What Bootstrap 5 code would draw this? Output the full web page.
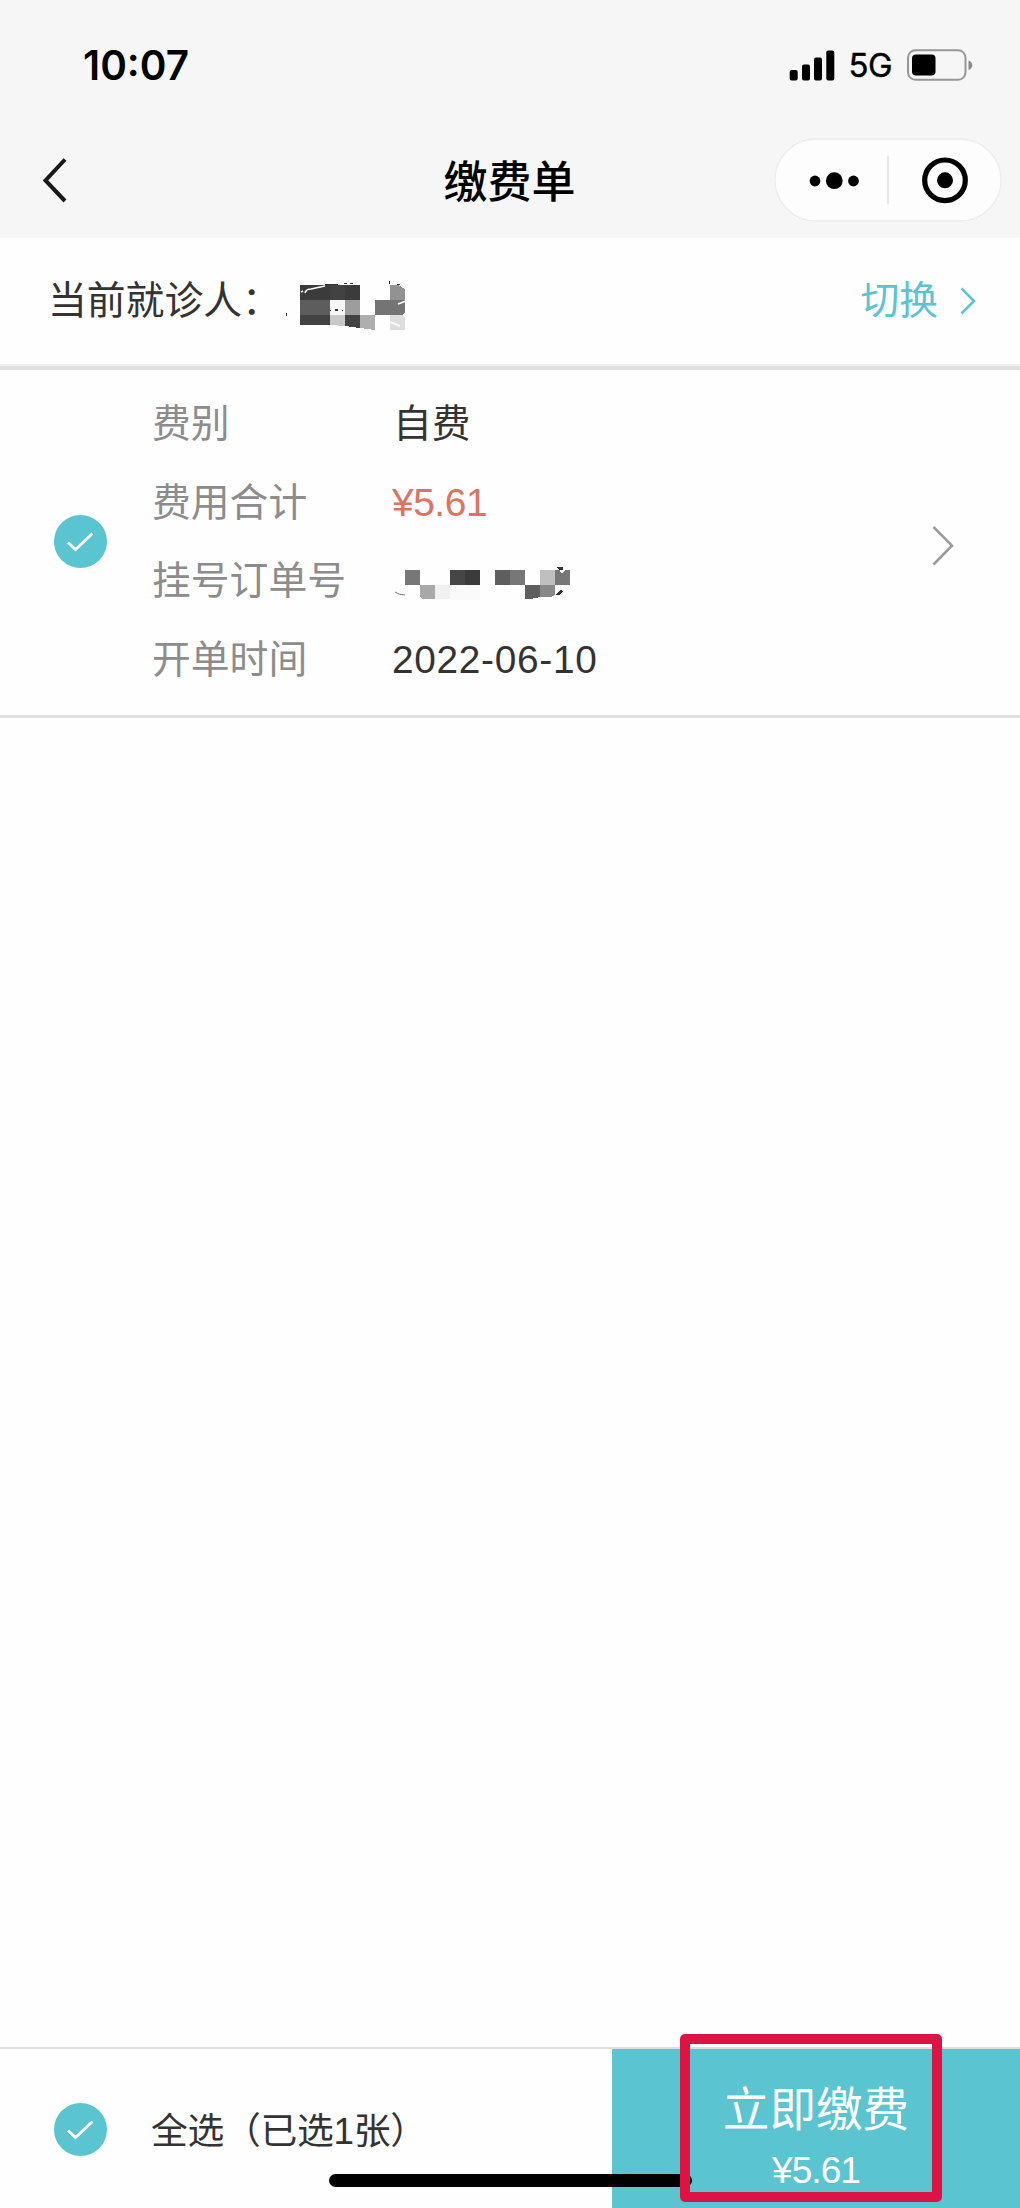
<!DOCTYPE html>
<html lang="zh-CN">
<head>
<meta charset="utf-8">
<meta name="viewport" content="width=device-width, initial-scale=1">
<title>缴费单</title>
<link rel="stylesheet" href="https://cdn.jsdelivr.net/npm/bootstrap@5.3.0/dist/css/bootstrap.min.css">
<style>
  body { font-family: "Liberation Sans", "Noto Sans CJK SC", sans-serif; font-size: 38.8px; line-height: 1; color: #333; background: #fefefe; }
  svg { display: block; flex: none; }
  .screen { height: 2208px; overflow: hidden; }
  .top-area { background: #f6f6f6; height: 238px; }
  .status-line { height: 122px; padding: 8px 47px 0 83px; font-family: Inter, sans-serif; color: #000; }
  .clock { font-size: 40.5px; font-weight: 600; padding-top: 2px; }
  .net { font-size: 33px; margin: 1px 15px 0 14px; letter-spacing: -.6px; -webkit-text-stroke: .4px #000; }
  .title-line { height: 116px; padding: 0 18px 0 42px; }
  .page-title { font-size: 44px; font-weight: 500; color: #000; font-family: "Noto Sans CJK SC", sans-serif; padding: 0 1px 1px 0; }
  .capsule { width: 228px; height: 84px; }
  .patient { height: 132px; padding: 0 43px 1px 48px; border-bottom: 4px solid #e0e0e0; box-shadow: inset 0 -2px #efefef; }
  .teal { color: #5bc4d1; }
  .bill { height: 348px; padding: 15px 66px 0 54px; border-bottom: 3px solid #e0e0e0; }
  .bill-row { height: 78.7px; }
  .bill-key { width: 241px; color: #8c8c8c; }
  .price { color: #dc7460; letter-spacing: -.4px; margin-left: -1px; }
  .day { letter-spacing: .7px; margin-left: -1px; }
  .pay-bar { height: 161px; border-top: 2px solid #dedede; }
  .choose { width: 612px; padding: 4px 0 0 54px; font-size: 36.8px; }
  .choose-text { margin-left: 44px; padding-top: 4px; letter-spacing: -.3px; }
  .pay-btn { background: #5bc4d1; padding: 36px 0 0; }
  .pay-name { font-size: 46.6px; line-height: 50px; }
  .pay-sum { font-size: 37px; line-height: 40px; margin-top: 16px; letter-spacing: -.9px; }
  .home-line { left: 329px; top: 2174px; width: 363px; height: 13px; border-radius: 7px; background: #000; }
  .marker { left: 680px; top: 2034px; width: 262px; height: 168px; border: 10px solid #db1444; border-radius: 5px; }
</style>
<script src="https://cdn.jsdelivr.net/npm/bootstrap@5.3.0/dist/js/bootstrap.bundle.min.js"></script>
</head>
<body>
<div class="screen position-relative d-flex flex-column">
  <header class="top-area">
    <div class="status-line d-flex align-items-center">
      <span class="clock me-auto">10:07</span>
      <svg width="46" height="31" viewBox="0 0 46 31"><g fill="#000"><rect x=".7" y="20" width="8" height="10.5" rx="2"/><rect x="13" y="14.5" width="8" height="16" rx="2"/><rect x="25" y="7.5" width="8" height="23" rx="2"/><rect x="37.3" y=".5" width="8" height="30" rx="2"/></g></svg>
      <span class="net">5G</span>
      <svg width="66" height="32" viewBox="0 0 66 32"><rect x="1" y="1.2" width="57.5" height="29.6" rx="7.5" fill="none" stroke="#979797" stroke-width="2"/><rect x="5" y="5.5" width="23.5" height="21" rx="4" fill="#000"/><path d="M61.5 11.5c5 1.500 5 8 0 9.500z" fill="#888"/></svg>
    </div>
    <nav class="title-line d-flex align-items-center justify-content-between position-relative">
      <svg width="26" height="46" viewBox="0 0 26 46"><path d="M23 2.500L3.500 23.500l19.500 20.500" fill="none" stroke="#181818" stroke-width="4"/></svg>
      <h1 class="page-title m-0 position-absolute top-50 start-50 translate-middle">缴费单</h1>
      <svg class="capsule" viewBox="0 0 228 84"><rect x="1" y="1" width="226" height="82" rx="41" fill="#fdfdfd" stroke="#ececec" stroke-width="1.300"/><path d="M114 18v48" stroke="#dfdfdf" stroke-width="1.500"/><circle cx="41" cy="43" r="5.400"/><circle cx="60.300" cy="42.700" r="8.400"/><circle cx="79.500" cy="43" r="5.400"/><circle cx="171" cy="42.300" r="20.300" fill="none" stroke="#000" stroke-width="5.200"/><circle cx="171" cy="42.300" r="8"/></svg>
    </nav>
  </header>

  <section class="patient d-flex align-items-center">
    <span>当前就诊人：</span>
    <svg width="125" height="50" viewBox="0 0 125 50" style="margin:0 0 0 4px" overflow="visible" shape-rendering="crispEdges">
      <g transform="translate(-15,0)">
      <path fill="#3b3b3b" d="M30 8h60v15H30z"/><path fill="#424242" d="M60 8h15v15H60z"/><path fill="#929292" d="M120 8h8l7 4v11h-15z"/>
      <path fill="#5d5d5d" d="M30 23h30v15H30z"/><path fill="#f6f6f6" d="M60 23h15v15H60z"/><path fill="#9d9d9d" d="M75 23h15v15H75z"/><path fill="#747474" d="M105 23h30v13l-3 2h-27z"/>
      <path fill="#424242" d="M30 38h30v10H30zM75 38h15v13l-15-2z"/><path fill="#c8c8c8" d="M60 38h15v11l-15-1z"/><path fill="#aeaeae" d="M90 38h15v15l-15-2z"/><path fill="#dedede" d="M120 38h12l3 3v12h-15z"/>
      <path fill="#333" d="M55 7h13v1H55zM74 6h3v1h-3zM80 6h3v1h-3zM119 4h1v3h-1zM127 7h3v1h-3zM65 32h3v2h-3zM60 33h1v1h-1zM72 33h1v1h-1zM16 36h1v3h-1z"/>
      <g shape-rendering="auto" fill="none" stroke="#fff" stroke-width="1.500"><path d="M35 16q1-4 6-4l14-3M31 15l2-1M128 27l8-3M120 45l10 4"/></g></g>
    </svg>
    <a href="#" class="teal text-decoration-none ms-auto d-flex align-items-center"><span>切换</span>
      <svg width="18" height="30" viewBox="0 0 18 30" style="margin-left:21px"><path d="M2.500 2.500L15 15 2.500 27.500" fill="none" stroke="#5bc4d1" stroke-width="2.500"/></svg></a>
  </section>

  <section class="bill d-flex">
    <svg width="53" height="53" viewBox="0 0 53 53" style="margin-top:130px"><circle cx="26.500" cy="26.500" r="26.500" fill="#5bc4d1"/><path d="M14 27.500l7.500 7L38.500 18.500" fill="none" stroke="#fff" stroke-width="2.800"/></svg>
    <div class="flex-grow-1" style="margin-left:45px">
      <div class="bill-row d-flex align-items-center"><span class="bill-key">费别</span><span>自费</span></div>
      <div class="bill-row d-flex align-items-center"><span class="bill-key">费用合计</span><span class="price">¥5.61</span></div>
      <div class="bill-row d-flex align-items-center"><span class="bill-key">挂号订单号</span>
        <svg width="180" height="36" viewBox="13 14 180 36" shape-rendering="crispEdges">
          <path fill="#777" d="M25 20h15v15H25zM130 20h15v15h-15zM175 20h15v15h-15z"/><path fill="#464646" d="M70 20h15v15H70z"/><path fill="#3b3b3b" d="M85 20h15v15H85z"/><path fill="#5e5e5e" d="M115 20h15v15h-15zM145 35h15v12l-10 2h-5z"/><path fill="#bfbfbf" d="M160 20h15v15h-15z"/><path fill="#a8a8a8" d="M40 35h15v14H43l-3-2z"/><path fill="#f0f0f0" d="M55 35h15v14H55z"/><path fill="#888" d="M160 35h15v10l-4 2h-11z"/><path fill="#fafafa" d="M70 35h30v15H70z"/>
          <path fill="#333" d="M177 17h6v3h-4zM181 39l2 3-4 3h-3z"/><path fill="none" stroke="#777" shape-rendering="auto" d="M15 42q4 3 10 3"/><path fill="#fff" d="M180 20h5l-2 3h-2z"/>
        </svg></div>
      <div class="bill-row d-flex align-items-center"><span class="bill-key">开单时间</span><span class="day">2022-06-10</span></div>
    </div>
    <svg width="22" height="42" viewBox="0 0 22 42" style="margin-top:140px"><path d="M1.500 2L20 20.700 1.500 39.500" fill="none" stroke="#999" stroke-width="2.500"/></svg>
  </section>

  <footer class="pay-bar d-flex mt-auto">
    <div class="choose d-flex align-items-center">
      <svg width="53" height="53" viewBox="0 0 53 53" style="margin-top:-2px"><circle cx="26.500" cy="26.500" r="26.500" fill="#5bc4d1"/><path d="M14 27.500l7.500 7L38.500 18.500" fill="none" stroke="#fff" stroke-width="2.800"/></svg>
      <span class="choose-text">全选（已选1张）</span>
    </div>
    <button class="pay-btn btn rounded-0 border-0 flex-grow-1 text-white d-flex flex-column align-items-center"><span class="pay-name">立即缴费</span><span class="pay-sum">¥5.61</span></button>
  </footer>
  <div class="home-line position-absolute"></div>
  <div class="marker position-absolute"></div>
</div>
</body>
</html>
